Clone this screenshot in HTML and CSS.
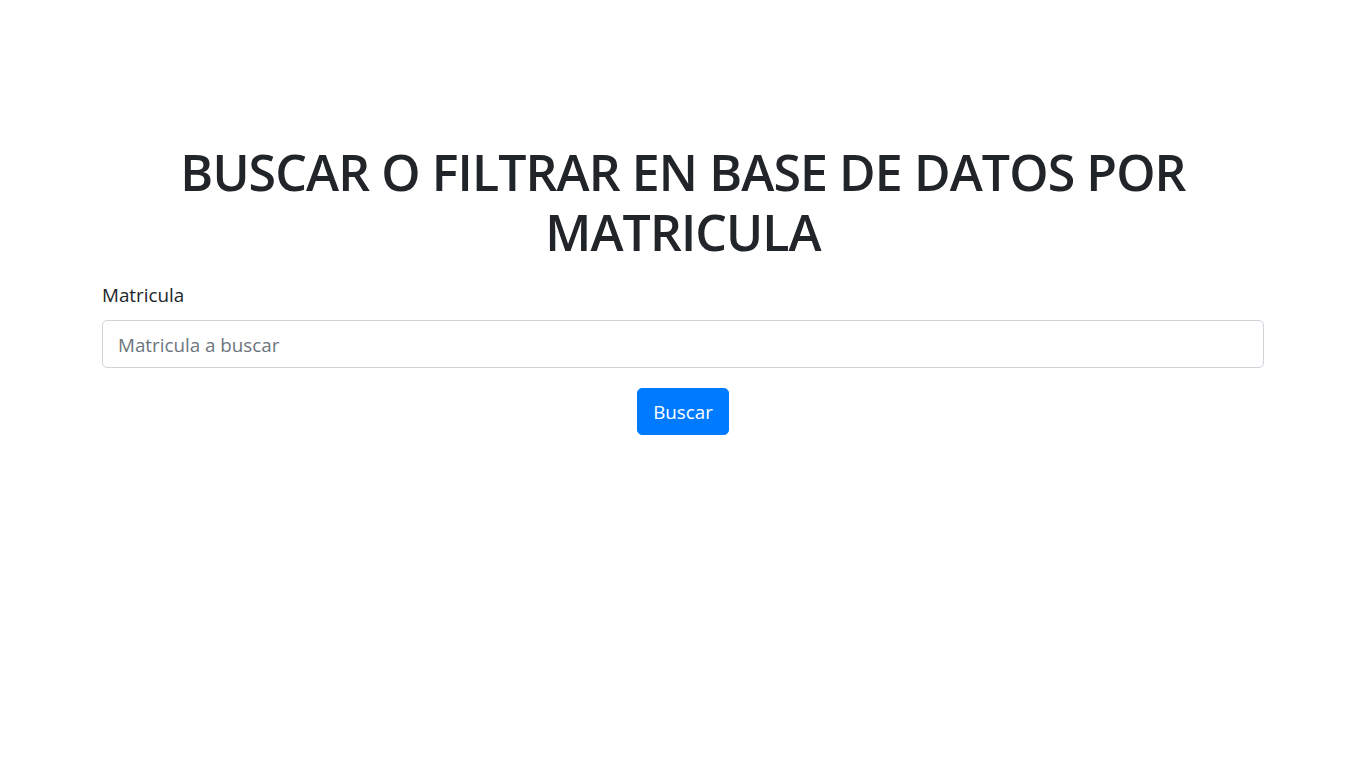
FILE: index.html
```html
<!DOCTYPE html>
<html lang="es">
<head>
<meta charset="utf-8">
<title>Buscar</title>
<link rel="stylesheet" href="styles.css">
</head>
<body>
<main class="container">
  <h1 class="title">BUSCAR O FILTRAR EN BASE DE DATOS POR MATRICULA</h1>
  <form class="search-form">
    <div class="form-group">
      <label class="form-label" for="matricula">Matricula</label>
      <input class="form-control" id="matricula" type="text" placeholder="Matricula a buscar">
    </div>
    <div class="actions">
      <button class="btn-primary" type="button">Buscar</button>
    </div>
  </form>
</main>
</body>
</html>
```
FILE: styles.css
```css
html { font-size: 20px; }
body {
  margin: 0;
  font-family: "Open Sans", "Noto Sans", sans-serif;
  color: #212529;
  background: #fff;
  line-height: 1.5;
}
.container {
  max-width: 1162px;
  margin: 0 auto;
  padding-top: 142px;
}
.title {
  margin: 0 0 18px;
  font-size: 50px;
  font-weight: 600;
  line-height: 60px;
  letter-spacing: -0.9px;
  text-align: center;
}
.form-group {
  display: flex;
  flex-direction: column;
  margin-bottom: 20px;
}
.form-label {
  font-size: 18.8px;
  line-height: 30px;
  margin-bottom: 10px;
}
.form-control {
  box-sizing: border-box;
  height: 48px;
  padding: 1px 15px 0;
  font-family: inherit;
  font-size: 18.8px;
  color: #495057;
  border: 1px solid #ced4da;
  border-radius: 5px;
  outline: none;
}
.form-control::placeholder { color: #6c757d; }
.actions {
  display: flex;
  justify-content: center;
}
.btn-primary {
  box-sizing: border-box;
  height: 47px;
  padding: 0 15px;
  font-family: inherit;
  font-size: 18.8px;
  color: #fff;
  background: #007bff;
  border: 1px solid #007bff;
  border-radius: 5px;
}
```
